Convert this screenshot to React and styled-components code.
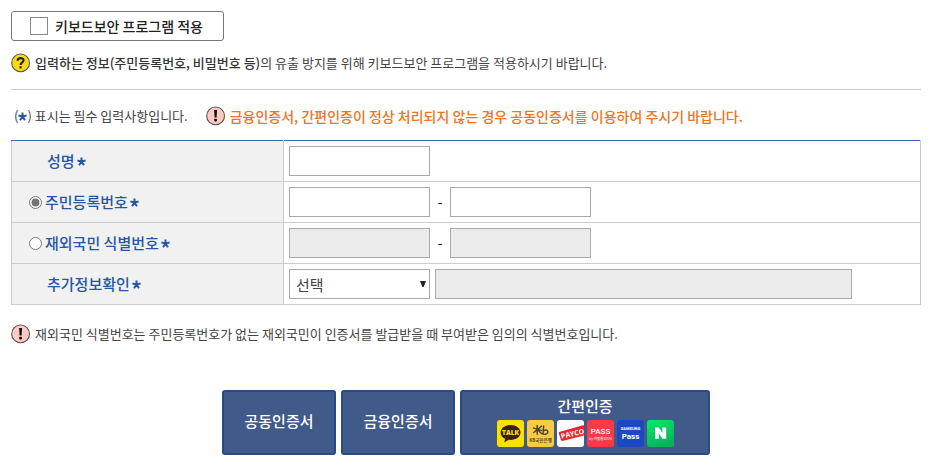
import { useState } from 'react';
import { createGlobalStyle, styled } from 'styled-components';

const FIELDS = [
    { id: 'jumin', label: '주민등록번호' },
    { id: 'overseas', label: '재외국민 식별번호' },
];

const Required = () => (
    <StyledRequired viewBox="0 0 9 9" role="img" aria-label="필수">
        <path d="M4.5 4.7V0.5M4.5 4.7L8.6 3.4M4.5 4.7L7 8.3M4.5 4.7L2 8.3M4.5 4.7L0.4 3.4" />
    </StyledRequired>
);

const NoticeIcon = ({ type }) => (
    <StyledNoticeIcon viewBox="0 0 20 20" aria-hidden="true">
        <circle cx="9.6" cy="9.9" r="8.9" fill={type === 'help' ? '#fbd914' : '#ffc9c4'} stroke="#555" strokeWidth="1.1" />
        {type === 'help' ? (
            <g fill="none" stroke="#222" strokeWidth="2.1">
                <path d="M6.5 7.7C6.7 4.3 12.6 4.3 12.6 7.3C12.6 9.4 9.6 9.4 9.6 11.9" />
                <path d="M9.6 13.2V15.4" />
            </g>
        ) : (
            <g fill="#111">
                <path d="M8.1 4H11.1L10.6 11.6H8.6Z" />
                <rect x="8.2" y="12.8" width="2.8" height="2.6" rx="0.8" />
            </g>
        )}
    </StyledNoticeIcon>
);

const AppIcons = () => (
    <IconList aria-hidden="true">
        <AppIcon viewBox="0 0 27 27">
            <rect width="27" height="27" rx="3" fill="#fae100" />
            <path d="M13.5 5C7.8 5 3.6 8.3 3.6 12.5C3.6 15.2 5.4 17.5 8.1 18.8L7.3 22.6L11.6 19.8C18.2 20.6 23.5 17.2 23.5 12.5C23.5 8.3 19.2 5 13.5 5Z" fill="#3b1e1e" />
            <text x="13.5" y="15" fontSize="6.5" fontWeight="800" fill="#fae100">TALK</text>
        </AppIcon>
        <AppIcon viewBox="0 0 27 27">
            <rect width="27" height="27" rx="3" fill="#f8ca48" />
            <path d="M6 7.8L15 10.6M10.2 5V14.8M6.2 13L15 5.8M10.6 9.8L15 14M16.7 5.5L16 14C18.5 15 21.5 13.5 20.8 11.2C20 9.3 17.5 10 16.2 11.3" fill="none" stroke="#4b422d" strokeWidth="1.4" />
            <text x="13.5" y="21.8" fontSize="4.5" fontWeight="700" fill="#5c4c25">KB국민은행</text>
        </AppIcon>
        <AppIcon viewBox="0 0 27 27">
            <rect width="27" height="27" rx="3" fill="#fff" />
            <path d="M2.2 12L26 5.2Q27 5 27 6V15.6L5.4 20.9Q4.2 21 3.9 20.1L1.8 13.2Q1.6 12.3 2.2 12Z" fill="#f0242d" />
            <text x="15.6" y="16.4" fontSize="7" fontWeight="700" fill="#fff" transform="rotate(-13 15 14)">PAYCO</text>
        </AppIcon>
        <AppIcon viewBox="0 0 27 27">
            <rect width="27" height="27" rx="3" fill="#fb3949" />
            <text className="sans" x="13.5" y="14.4" fontSize="8" fontWeight="500" fill="#fff">PASS</text>
            <text x="13.5" y="20.2" fontSize="3.5" fill="#fff">by 이동통신3사</text>
        </AppIcon>
        <AppIcon viewBox="0 0 27 27">
            <rect width="27" height="27" rx="3" fill="#1c49c2" />
            <text className="sans" x="13.5" y="9.6" fontSize="4" fontWeight="700" fill="#fff">SAMSUNG</text>
            <text className="sans" x="13.5" y="19" fontSize="8" fontWeight="700" fill="#fff">Pass</text>
        </AppIcon>
        <AppIcon viewBox="0 0 27 27">
            <defs>
                <linearGradient id="naver" x1="0" y1="0" x2="0.4" y2="1">
                    <stop offset="0" stopColor="#04ec68" />
                    <stop offset="1" stopColor="#05b45a" />
                </linearGradient>
            </defs>
            <rect width="27" height="27" rx="3" fill="url(#naver)" />
            <path d="M8 7.5H11.8L15.4 12.9V7.5H19.2V18.8H15.4L11.8 13.5V18.8H8Z" fill="#fff" />
        </AppIcon>
    </IconList>
);

const App = () => {
    const [idType, setIdType] = useState('jumin');

    return (
        <>
            <GlobalStyle />
            <Page>
                <KeyboardSecurity>
                    <input type="checkbox" />
                    키보드보안 프로그램 적용
                </KeyboardSecurity>

                <Guide>
                    <NoticeIcon type="help" />
                    <p><strong>입력하는 정보(주민등록번호, 비밀번호 등)</strong>의 유출 방지를 위해 키보드보안 프로그램을 적용하시기 바랍니다.</p>
                </Guide>

                <FormHead>
                    <p>(<Required />) 표시는 필수 입력사항입니다.</p>
                    <Notice>
                        <NoticeIcon type="alert" />
                        <Warning>금융인증서, 간편인증이 정상 처리되지 않는 경우 공동인증서를 이용하여 주시기 바랍니다.</Warning>
                    </Notice>
                </FormHead>

                <FormTable>
                    <tbody>
                        <tr>
                            <th scope="row"><Label $indent htmlFor="name">성명<Required /></Label></th>
                            <td><Fields><TextInput id="name" type="text" /></Fields></td>
                        </tr>
                        {FIELDS.map((f) => (
                            <tr key={f.id}>
                                <th scope="row">
                                    <Label>
                                        <input
                                            type="radio"
                                            name="idType"
                                            checked={idType === f.id}
                                            onChange={() => setIdType(f.id)}
                                        />
                                        {f.label}<Required />
                                    </Label>
                                </th>
                                <td>
                                    <Fields>
                                        <TextInput type="text" aria-label={`${f.label} 앞자리`} disabled={idType !== f.id} />
                                        <Dash>-</Dash>
                                        <TextInput type="password" aria-label={`${f.label} 뒷자리`} disabled={idType !== f.id} />
                                    </Fields>
                                </td>
                            </tr>
                        ))}
                        <tr>
                            <th scope="row"><Label $indent htmlFor="extra">추가정보확인<Required /></Label></th>
                            <td>
                                <Fields $gap>
                                    <SelectBox>
                                        <select id="extra"><option>선택</option></select>
                                        <svg viewBox="0 0 6 6" aria-hidden="true"><path d="M0 0H6L3.6 6H2.4Z" /></svg>
                                    </SelectBox>
                                    <TextInput $wide type="text" aria-label="추가정보" disabled />
                                </Fields>
                            </td>
                        </tr>
                    </tbody>
                </FormTable>

                <Notice>
                    <NoticeIcon type="alert" />
                    <p>재외국민 식별번호는 주민등록번호가 없는 재외국민이 인증서를 발급받을 때 부여받은 임의의 식별번호입니다.</p>
                </Notice>

                <Buttons>
                    <CertButton type="button">공동인증서</CertButton>
                    <CertButton type="button">금융인증서</CertButton>
                    <CertButton type="button" $wide>
                        간편인증
                        <AppIcons />
                    </CertButton>
                </Buttons>
            </Page>
        </>
    );
};

const GlobalStyle = createGlobalStyle`
    * {
        box-sizing: border-box;
    }

    body {
        margin: 0;
        background: #fff;
        color: #444;
        font-family: 'Noto Sans CJK KR', sans-serif;
        font-size: 13px;
        font-weight: 400;
        line-height: 20px;
    }

    p {
        margin: 0;
    }

    strong {
        font-weight: 500;
        color: #333;
    }

    input, select, button {
        margin: 0;
        font-family: inherit;
    }
`

const Page = styled.main`
    padding: 11px 20px 16px 11px;
`

const KeyboardSecurity = styled.label`
    display: inline-flex;
    align-items: center;
    gap: 7px;
    height: 30px;
    padding: 0 20px 0 18px;
    border: 1px solid #777;
    border-radius: 3px;
    color: #222;
    font-size: 14px;
    font-weight: 500;

    input {
        appearance: none;
        width: 18px;
        height: 18px;
        border: 1px solid #888;
        background: #fff;
    }

    input:checked {
        background: #3f5a8a;
    }
`

const Notice = styled.div`
    display: flex;
    align-items: center;
    gap: 4px;
`

const Guide = styled(Notice)`
    padding: 12px 0 16px;
    border-bottom: 1px solid #ccc;
`

const FormHead = styled.div`
    display: flex;
    align-items: center;
    gap: 18px;
    padding: 16px 0 14px 3px;
`

const Warning = styled.p`
    color: #ec7424;
    font-size: 14px;
    font-weight: 500;
`

const StyledNoticeIcon = styled.svg`
    flex: none;
    width: 20px;
    height: 20px;
`

const StyledRequired = styled.svg`
    width: 9px;
    height: 9px;
    fill: none;
    stroke: #2456a4;
    stroke-width: 2;
`

const FormTable = styled.table`
    width: 100%;
    margin-bottom: 19px;
    border-collapse: collapse;
    table-layout: fixed;

    tr {
        height: 41px;
    }

    th, td {
        padding: 0 5px;
        border: 1px solid #ccc;
    }

    tr:first-child > * {
        border-top-color: #3a68ae;
    }

    th {
        width: 272px;
        padding-left: 17px;
        background: #f1f1f1;
        text-align: left;
    }
`

const Label = styled.label`
    display: flex;
    align-items: center;
    gap: 2px;
    padding-left: ${({ $indent }) => ($indent ? '18px' : 0)};
    color: #2456a4;
    font-size: 15px;
    font-weight: 500;

    input {
        width: 13px;
        height: 13px;
        margin-right: 1px;
        accent-color: #757575;
    }
`

const Fields = styled.div`
    display: flex;
    align-items: center;
    gap: ${({ $gap }) => ($gap ? '5px' : 0)};
`

const TextInput = styled.input`
    width: ${({ $wide }) => ($wide ? '417px' : '141px')};
    height: 30px;
    padding: 0 6px;
    border: 1px solid #a9a9a9;
    background: #fff;
    font-size: 15px;

    &:disabled {
        background: #ebebeb;
    }
`

const Dash = styled.span`
    width: 20px;
    text-align: center;
    font-size: 15px;
    color: #222;
`

const SelectBox = styled.div`
    position: relative;
    width: 141px;

    select {
        display: block;
        appearance: none;
        width: 100%;
        height: 30px;
        padding: 0 16px 0 6px;
        border: 1px solid #a9a9a9;
        border-radius: 0;
        background: #fff;
        color: #444;
        font-size: 15px;
    }

    svg {
        position: absolute;
        top: 12px;
        right: 4px;
        width: 6px;
        height: 6px;
        fill: #222;
        pointer-events: none;
    }
`

const Buttons = styled.div`
    display: flex;
    justify-content: center;
    gap: 5px;
    margin-top: 46px;
`

const CertButton = styled.button`
    display: flex;
    flex-direction: column;
    align-items: center;
    justify-content: center;
    gap: 4px;
    width: ${({ $wide }) => ($wide ? '250px' : '114px')};
    height: 65px;
    padding: 0 0 3px;
    border: 2px solid #2a4a85;
    border-radius: 3px;
    background: #405a8a;
    color: #fff;
    font-size: 15px;
    font-weight: 500;
    line-height: 20px;
    cursor: pointer;
`

const IconList = styled.span`
    display: flex;
    gap: 3px;
`

const AppIcon = styled.svg`
    width: 27px;
    height: 27px;
    overflow: hidden;

    text {
        font-family: 'Open Sans', 'Noto Sans CJK KR', sans-serif;
        text-anchor: middle;
    }

    .sans {
        font-family: Roboto, sans-serif;
    }
`

export default App;
